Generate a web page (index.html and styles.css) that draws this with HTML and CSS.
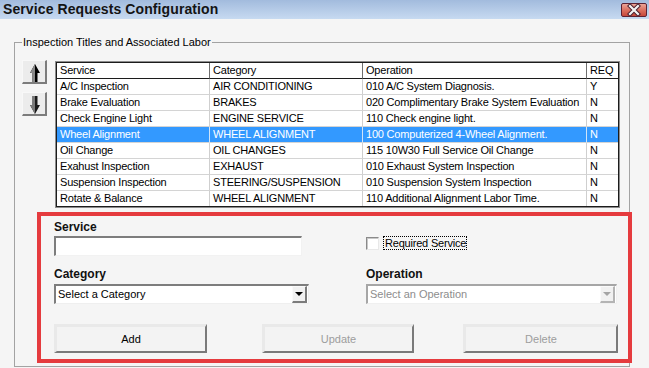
FILE: index.html
```html
<!DOCTYPE html>
<html>
<head>
<meta charset="utf-8">
<link rel="stylesheet" href="styles.css">
</head>
<body>
<div class="window">
  <div class="titlebar">
    <span class="title">Service Requests Configuration</span>
    <span class="close">
      <svg width="24" height="12" viewBox="0 0 24 12">
        <path d="M8 2 L16 10 M16 2 L8 10" stroke="#4a2030" stroke-width="4.2" stroke-linecap="square"/>
        <path d="M8 2 L16 10 M16 2 L8 10" stroke="#f4f4f4" stroke-width="2.2" stroke-linecap="square"/>
      </svg>
    </span>
  </div>

  <fieldset class="group">
    <legend>Inspection Titles and Associated Labor</legend>
    <div class="top">
      <div class="arrows">
        <div class="arrow-btn">
          <svg width="22" height="22" viewBox="0 0 22 22">
            <polygon points="12,3 17,12 14.5,12 14.5,21 9.5,21 9.5,12 7,12" fill="#000"/>
            <polygon points="12,3 12,21 9.5,21 9.5,12 7,12" fill="#8a8a8a"/>
          </svg>
        </div>
        <div class="arrow-btn">
          <svg width="22" height="22" viewBox="0 0 22 22">
            <polygon points="12,21 17,12 14.5,12 14.5,3 9.5,3 9.5,12 7,12" fill="#1a1a1a"/>
            <polygon points="12,21 12,3 9.5,3 9.5,12 7,12" fill="#7a7a7a"/>
          </svg>
        </div>
      </div>
      <div class="table-wrap">
        <table class="grid">
          <colgroup>
            <col class="c1"><col class="c2"><col class="c3"><col class="c4">
          </colgroup>
          <thead>
            <tr><th>Service</th><th>Category</th><th>Operation</th><th>REQ</th></tr>
          </thead>
          <tbody>
            <tr><td>A/C Inspection</td><td>AIR CONDITIONING</td><td>010 A/C System Diagnosis.</td><td>Y</td></tr>
            <tr><td>Brake Evaluation</td><td>BRAKES</td><td>020 Complimentary Brake System Evaluation</td><td>N</td></tr>
            <tr><td>Check Engine Light</td><td>ENGINE SERVICE</td><td>110 Check engine light.</td><td>N</td></tr>
            <tr class="sel"><td>Wheel Alignment</td><td>WHEEL ALIGNMENT</td><td>100 Computerized 4-Wheel Alignment.</td><td>N</td></tr>
            <tr><td>Oil Change</td><td>OIL CHANGES</td><td>115 10W30 Full Service Oil Change</td><td>N</td></tr>
            <tr><td>Exahust Inspection</td><td>EXHAUST</td><td>010 Exhaust System Inspection</td><td>N</td></tr>
            <tr><td>Suspension Inspection</td><td>STEERING/SUSPENSION</td><td>010 Suspension System Inspection</td><td>N</td></tr>
            <tr class="last"><td>Rotate &amp; Balance</td><td>WHEEL ALIGNMENT</td><td>110 Additional Alignment Labor Time.</td><td>N</td></tr>
          </tbody>
        </table>
      </div>
    </div>

    <div class="editor">
      <div class="fields">
        <div class="label">Service</div>
        <div></div>
        <div class="textbox"></div>
        <div class="check-row">
          <span class="checkbox"></span>
          <span class="check-label">Required Service</span>
        </div>
        <div class="label label-gap">Category</div>
        <div class="label label-gap">Operation</div>
        <div class="combo">
          <span class="combo-text">Select a Category</span>
          <span class="combo-btn"><span class="tri"></span></span>
        </div>
        <div class="combo disabled">
          <span class="combo-text">Select an Operation</span>
          <span class="combo-btn"><span class="tri"></span></span>
        </div>
      </div>
      <div class="buttons">
        <div class="btn b-add">Add</div>
        <div class="btn b-upd disabled">Update</div>
        <div class="btn b-del disabled">Delete</div>
      </div>
    </div>
  </fieldset>
</div>
</body>
</html>
```

FILE: styles.css
```css
* { box-sizing: border-box; }

html, body {
  margin: 0;
  padding: 0;
}

body {
  width: 649px;
  height: 368px;
  overflow: hidden;
  background: #f5f5f5;
  font-family: "Liberation Sans", Arial, sans-serif;
  font-size: 11px;
  color: #000;
}

.window {
  width: 649px;
  height: 368px;
}

.titlebar {
  height: 19px;
  background: linear-gradient(#a2bbdd, #c7daf1);
  display: flex;
  align-items: center;
  justify-content: space-between;
  padding: 0 2px 0 3px;
}

.title {
  font-weight: bold;
  font-size: 14px;
  letter-spacing: 0.1px;
  color: #141414;
  line-height: 19px;
}

.close {
  width: 26px;
  height: 14px;
  border: 1px solid #5c2233;
  border-radius: 2px;
  background: linear-gradient(#eba396, #d96c5c 55%, #c7473a);
  display: flex;
  align-items: center;
  justify-content: center;
}

.group {
  margin: 17px 0 0 14px;
  width: 616px;
  height: 331px;
  border: 1px solid #a3a3a3;
  padding: 11px 0 0 7px;
  min-width: 0;
}

.group legend {
  font-size: 11px;
  line-height: 13px;
  padding: 0 1px;
  margin-left: 0;
  color: #000;
}

.top {
  display: flex;
  align-items: flex-start;
}

.arrows {
  width: 25px;
  display: flex;
  flex-direction: column;
  gap: 8px;
}

.arrow-btn {
  width: 25px;
  height: 24px;
  background: #ececec;
  border-style: solid;
  border-width: 1px 2px 2px 1px;
  border-color: #f8f8f8 #7c7c7c #7c7c7c #f8f8f8;
  display: flex;
  align-items: center;
  justify-content: center;
}

.table-wrap {
  margin-left: 8px;
  margin-top: 1px;
  width: 565px;
  border: 1px solid #8c8c8c;
  background: #fff;
}

.grid {
  border: 1px solid #1c1c1c;
  border-spacing: 0;
  border-collapse: separate;
  table-layout: fixed;
  width: 563px;
  background: #fff;
}

.c1 { width: 153px; }
.c2 { width: 153px; }
.c3 { width: 224px; }
.c4 { width: 31px; }

.grid th, .grid td {
  font-weight: normal;
  text-align: left;
  font-size: 11px;
  letter-spacing: -0.2px;
  line-height: 15px;
  padding: 0 0 0 3px;
  white-space: nowrap;
  overflow: hidden;
}

.grid th {
  border-right: 1px solid #6e6e6e;
  border-bottom: 1px solid #1c1c1c;
  background: #fff;
}

.grid td {
  border-right: 1px solid #cfcfcf;
  border-bottom: 1px solid #d4d4d4;
}

.grid th:last-child, .grid td:last-child {
  border-right: none;
}

.grid tr.last td {
  border-bottom: none;
}

.grid tr.sel td {
  background: #3399ff;
  color: #fff;
  border-right-color: #d0e4f8;
}

.editor {
  margin: 4px 0 0 15px;
  width: 595px;
  border: 4px solid #e53b3e;
  padding: 4px 0 6px 13px;
}

.fields {
  display: grid;
  grid-template-columns: 255px 251px;
  column-gap: 57px;
}

.label {
  font-weight: bold;
  font-size: 12px;
  line-height: 14px;
  color: #111;
}

.label-gap {
  margin-top: 11px;
}

.textbox {
  margin-top: 2px;
  width: 248px;
  height: 20px;
  background: #fff;
  border-style: solid;
  border-width: 2px 1px 1px 2px;
  border-color: #7d7d7d #f2f2f2 #f2f2f2 #7d7d7d;
}

.check-row {
  margin-top: 2px;
  display: flex;
  align-items: flex-start;
  height: 20px;
}

.checkbox {
  margin-top: 1px;
  width: 13px;
  height: 13px;
  background: #fff;
  border-style: solid;
  border-width: 1px;
  border-color: #8a8a8a #e8e8e8 #e8e8e8 #8a8a8a;
  box-shadow: inset 1px 1px 0 #c8c8c8;
}

.check-label {
  margin-left: 4px;
  border: 1px dotted #000;
  line-height: 12px;
  padding: 0 0 0 1px;
  font-size: 11px;
  letter-spacing: -0.2px;
}

.combo {
  margin-top: 3px;
  height: 20px;
  background: #fff;
  border-style: solid;
  border-width: 2px 1px 1px 2px;
  border-color: #7d7d7d #efefef #efefef #7d7d7d;
  display: flex;
  align-items: center;
  justify-content: space-between;
  padding-left: 2px;
}

.combo-text {
  font-size: 11px;
  line-height: 15px;
}

.combo-btn {
  width: 15px;
  height: 17px;
  margin-right: 1px;
  background: #f1f1f1;
  border-style: solid;
  border-width: 1px 2px 2px 1px;
  border-color: #fafafa #7c7c7c #7c7c7c #fafafa;
  display: flex;
  align-items: center;
  justify-content: center;
}

.tri {
  width: 0;
  height: 0;
  border-left: 4px solid transparent;
  border-right: 4px solid transparent;
  border-top: 4px solid #000;
}

.combo.disabled {
  border-color: #a6a6a6 #f0f0f0 #f0f0f0 #a6a6a6;
}

.combo.disabled .combo-text {
  color: #8d8d8d;
}

.combo.disabled .combo-btn {
  border-color: #fafafa #b4b4b4 #b4b4b4 #fafafa;
}

.combo.disabled .tri {
  border-top-color: #a4a4a4;
}

.buttons {
  display: flex;
  margin-top: 20px;
}

.btn {
  height: 29px;
  background: #f3f3f3;
  border-style: solid;
  border-width: 3px 2px 2px 3px;
  border-color: #e9e9e9 #7a7a7a #7a7a7a #e9e9e9;
  display: flex;
  align-items: center;
  justify-content: center;
  font-size: 11px;
}

.b-add { width: 153px; }
.b-upd { width: 152px; margin-left: 55px; }
.b-del { width: 155px; margin-left: 49px; }

.btn.disabled {
  color: #9d9d9d;
}
```
